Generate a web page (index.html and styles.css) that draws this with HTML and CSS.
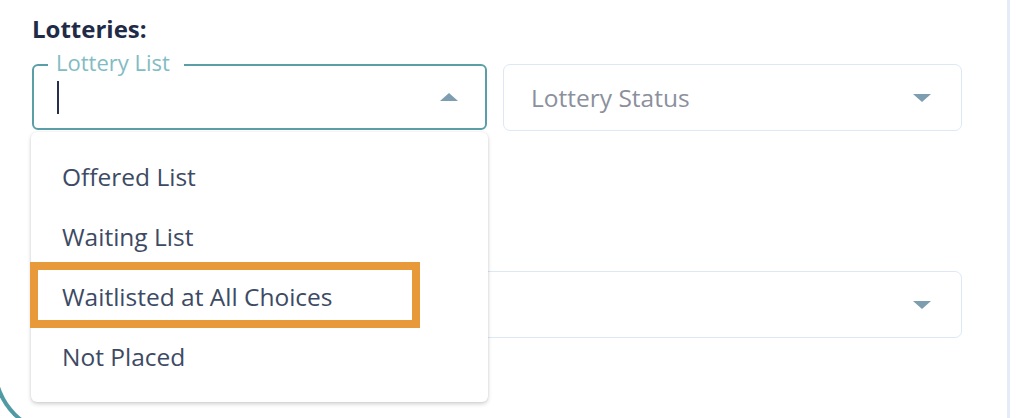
FILE: index.html
```html
<!DOCTYPE html>
<html>
<head>
<title>Lotteries</title>
<link rel="stylesheet" href="styles.css">
</head>
<body>
<div class="card">
  <h2 class="section-title">Lotteries:</h2>

  <div class="filters">
    <div class="field field-active">
      <span class="field-label">Lottery List</span>
      <span class="caret"></span>
      <span class="arrow arrow-up"></span>

      <ul class="menu">
        <li>Offered List</li>
        <li>Waiting List</li>
        <li class="is-marked">Waitlisted at All Choices</li>
        <li>Not Placed</li>
      </ul>
    </div>

    <div class="field">
      <span class="placeholder">Lottery Status</span>
      <span class="arrow"></span>
    </div>
  </div>

  <div class="field field-wide">
    <span class="arrow"></span>
  </div>
</div>
</body>
</html>
```

FILE: styles.css
```css
body {
  margin: 0;
  font-family: "Open Sans", "Noto Sans", sans-serif;
  background-color: #fff;
  overflow: hidden;
}

.card {
  margin-left: -7px;
  width: 1017px;
  height: 436px;
  box-sizing: border-box;
  padding: 13px 0 0 35px;
  border-left: 4px solid #4f9aa3;
  border-bottom: 4px solid #4f9aa3;
  border-right: 3px solid #e4ecf8;
  border-bottom-left-radius: 69px;
}

.section-title {
  margin: 0;
  font-size: 24px;
  line-height: 32px;
  font-weight: 700;
  color: #1f2b47;
}

.filters {
  display: grid;
  grid-template-columns: 455px 459px;
  gap: 16px;
  margin-top: 19px;
  width: 930px;
}

.field {
  position: relative;
  display: flex;
  align-items: center;
  height: 67px;
  box-sizing: border-box;
  padding: 0 30px 0 27px;
  border: 1px solid #dde8f6;
  border-radius: 7px;
  background-color: #fff;
}

.field-active {
  height: 66px;
  padding: 0 27px 0 23px;
  border: 2px solid #5a9fa8;
  border-radius: 6px;
}

.field-wide {
  width: 930px;
  margin-top: 140px;
}

.field-label {
  position: absolute;
  top: -18px;
  left: 14px;
  padding: 0 14px 0 8px;
  background-color: #fff;
  font-size: 22px;
  line-height: 28px;
  color: #82bcc3;
}

.caret {
  width: 2px;
  height: 33px;
  background-color: #25304a;
}

.placeholder {
  font-size: 24.5px;
  color: #8b909c;
}

.arrow {
  margin-left: auto;
  width: 0;
  height: 0;
  border-left: 9px solid transparent;
  border-right: 9px solid transparent;
  border-top: 8px solid #7d9db0;
}

.arrow-up {
  border-top: none;
  border-bottom: 8px solid #7d9db0;
}

.menu {
  position: absolute;
  top: 66px;
  left: -3px;
  z-index: 2;
  width: 457px;
  height: 270px;
  box-sizing: border-box;
  margin: 0;
  padding: 14px 0 16px;
  list-style: none;
  background-color: #fff;
  border-radius: 6px;
  box-shadow: 0 2px 4px rgba(0, 0, 0, 0.18), 0 0 2px rgba(0, 0, 0, 0.08);
}

.menu li {
  position: relative;
  display: flex;
  align-items: center;
  height: 60px;
  padding-left: 31px;
  font-size: 24.5px;
  color: #3d4a64;
}

.menu li.is-marked::after {
  content: "";
  position: absolute;
  top: -4px;
  left: -1px;
  width: 390px;
  height: 66px;
  box-sizing: border-box;
  border: 8px solid #e8993a;
}
```
